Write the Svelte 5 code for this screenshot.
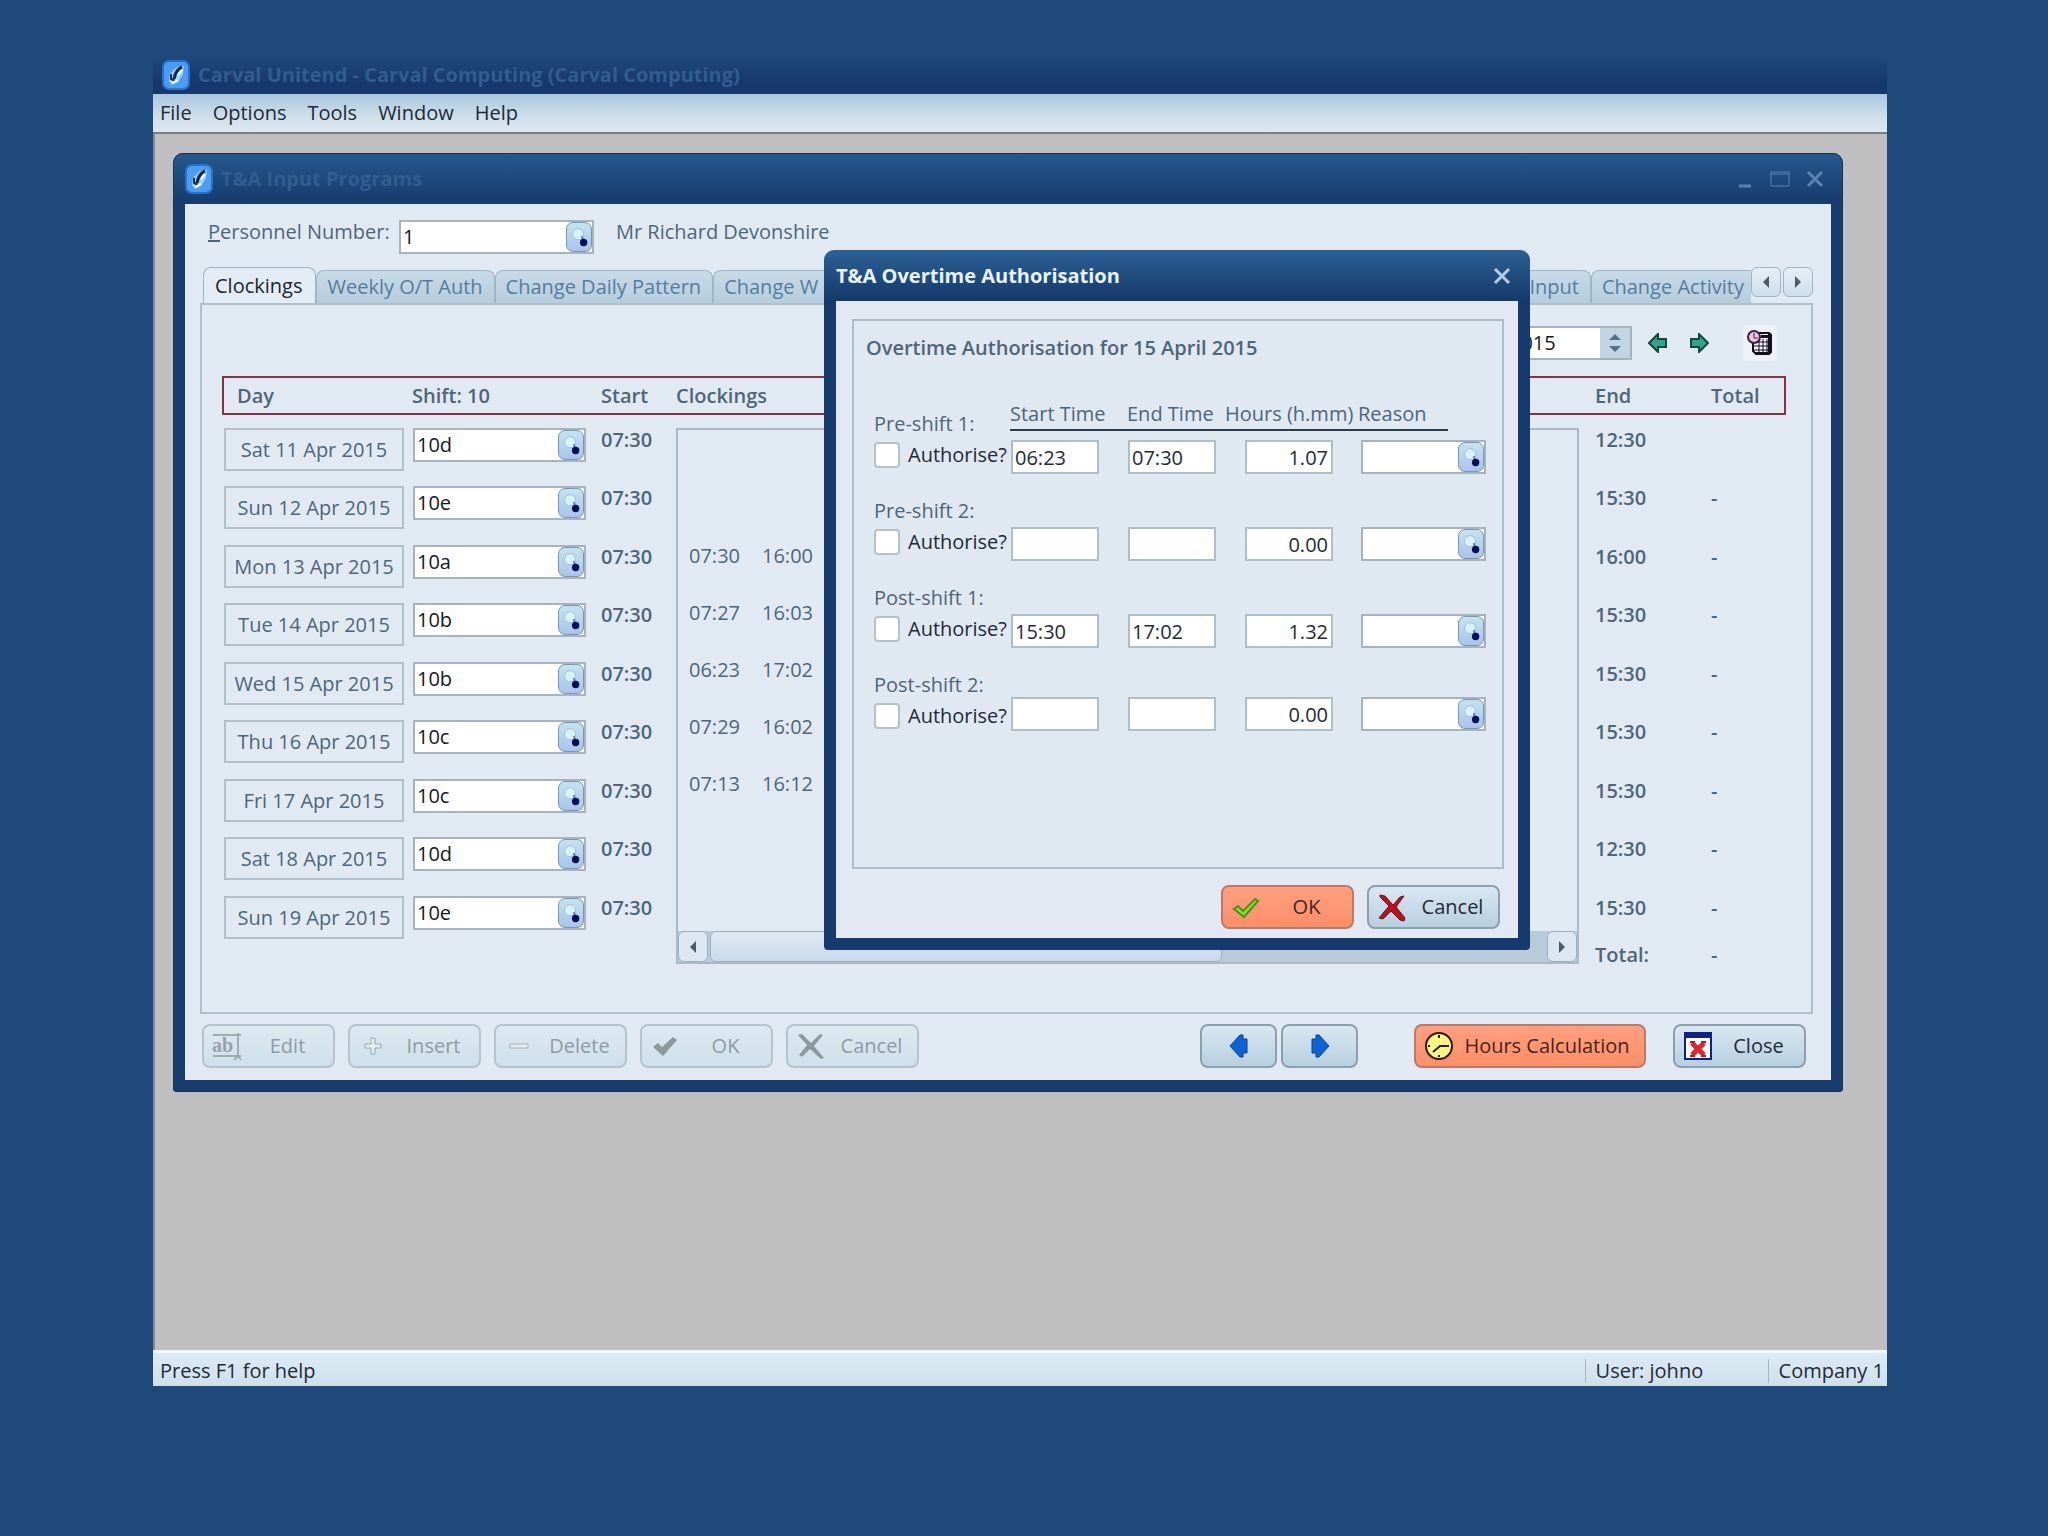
<script>
  const menus = ["File", "Options", "Tools", "Window", "Help"];

  const days = [
    { day: "Sat 11 Apr 2015", shift: "10d", start: "07:30", end: "12:30", total: "" },
    { day: "Sun 12 Apr 2015", shift: "10e", start: "07:30", end: "15:30", total: "-" },
    { day: "Mon 13 Apr 2015", shift: "10a", start: "07:30", end: "16:00", total: "-" },
    { day: "Tue 14 Apr 2015", shift: "10b", start: "07:30", end: "15:30", total: "-" },
    { day: "Wed 15 Apr 2015", shift: "10b", start: "07:30", end: "15:30", total: "-" },
    { day: "Thu 16 Apr 2015", shift: "10c", start: "07:30", end: "15:30", total: "-" },
    { day: "Fri 17 Apr 2015", shift: "10c", start: "07:30", end: "15:30", total: "-" },
    { day: "Sat 18 Apr 2015", shift: "10d", start: "07:30", end: "12:30", total: "-" },
    { day: "Sun 19 Apr 2015", shift: "10e", start: "07:30", end: "15:30", total: "-" },
  ];

  const clockings = [
    ["", ""],
    ["", ""],
    ["07:30", "16:00"],
    ["07:27", "16:03"],
    ["06:23", "17:02"],
    ["07:29", "16:02"],
    ["07:13", "16:12"],
  ];

  const overtime = [
    { name: "Pre-shift 1:", start: "06:23", end: "07:30", hours: "1.07" },
    { name: "Pre-shift 2:", start: "", end: "", hours: "0.00" },
    { name: "Post-shift 1:", start: "15:30", end: "17:02", hours: "1.32" },
    { name: "Post-shift 2:", start: "", end: "", hours: "0.00" },
  ];
</script>

{#snippet logo()}
  <svg class="logo" viewBox="0 0 28 30" aria-hidden="true">
    <rect x="1" y="1" width="26" height="28" rx="6" fill="#4a9df2" stroke="#2b70cc" stroke-width="2" />
    <path d="M8 14l7-7 7-1-1 8-5 8-6 3-3-4z" fill="#a5d2f9" />
    <path d="M20 7c-5 2-7 6-8 12" fill="none" stroke="#0a2a50" stroke-width="3" />
    <path d="M9 14v5l4 2" fill="none" stroke="#0a2a50" stroke-width="2" />
    <path d="M10 23l6-3M16 15l4-5" stroke="#f4fbff" stroke-width="2" />
  </svg>
{/snippet}

{#snippet lookup(label)}
  <button class="lookup" aria-label={label}>
    <svg viewBox="0 0 26 30" aria-hidden="true">
      <circle cx="12" cy="12" r="6" fill="#d8f2fd" stroke="#9cbbe0" stroke-width="1" />
      <path d="M16 14l2 6" stroke="#5c7fb8" stroke-width="2" />
      <circle cx="18" cy="21" r="4" fill="#040f5a" />
    </svg>
  </button>
{/snippet}

<div class="desktop">
  <div class="app">
    <header class="app-title">
      {@render logo()}
      <span>Carval Unitend - Carval Computing (Carval Computing)</span>
    </header>

    <nav class="menubar">
      {#each menus as menu}
        <button>{menu}</button>
      {/each}
    </nav>

    <main class="workspace">
      <section class="window">
        <header class="window-title">
          {@render logo()}
          <h1>T&amp;A Input Programs</h1>
          <div class="window-buttons">
            <button aria-label="Minimise">
              <svg viewBox="0 0 20 20"><path d="M4 17h12" /></svg>
            </button>
            <button aria-label="Maximise">
              <svg viewBox="0 0 20 20"><path d="M1 3h18v14H1zM1 5h18" class="thin" /></svg>
            </button>
            <button aria-label="Close window">
              <svg viewBox="0 0 20 20"><path d="M3 3l14 14M17 3L3 17" /></svg>
            </button>
          </div>
        </header>

        <div class="window-body">
          <div class="person">
            <label for="personnel"><u>P</u>ersonnel Number:</label>
            <div class="field">
              <input id="personnel" type="text" value="1" />
              {@render lookup("Find person")}
            </div>
            <span>Mr Richard Devonshire</span>
          </div>

          <div class="tabs">
            <button class="tab active">Clockings</button>
            <button class="tab">Weekly O/T Auth</button>
            <button class="tab">Change Daily Pattern</button>
            <button class="tab wide">Change W</button>
            <button class="tab">Input</button>
            <button class="tab last">Change Activity</button>
            <div class="arrows">
              <button aria-label="Previous tabs">
                <svg viewBox="0 0 10 12"><path d="M8 0v12L2 6z" /></svg>
              </button>
              <button aria-label="Next tabs">
                <svg viewBox="0 0 10 12"><path d="M2 0v12l6-6z" /></svg>
              </button>
            </div>
          </div>

          <div class="panel">
            <div class="period">
              <div class="field date">
                <input type="text" value="2015" aria-label="Period" />
                <button class="spin" aria-label="Change period">
                  <svg viewBox="0 0 14 20"><path d="M1 7l6-6 6 6zM1 13l6 6 6-6z" /></svg>
                </button>
              </div>
              <button class="step" aria-label="Previous period">
                <svg viewBox="0 0 20 20"><path d="M1 10l9-9v5h8v8h-8v5z" /></svg>
              </button>
              <button class="step" aria-label="Next period">
                <svg viewBox="0 0 20 20"><path d="M19 10l-9-9v5H2v8h8v5z" /></svg>
              </button>
              <button class="calc" aria-label="Calculator">
                <svg viewBox="0 0 26 26">
                  <path d="M9 3h13l2 2v17l-2 2H9l-3-3V9z" fill="#f6f3fa" stroke="#15101c" stroke-width="2" />
                  <path d="M14 5h9v3h-9z" fill="#15101c" />
                  <path d="M7 12h17M7 16h17M7 20h17M12 9v14M16 9v14M20 9v14" stroke="#15101c" stroke-width="1" />
                  <path d="M22 4v19M8 23h15" stroke="#15101c" stroke-width="2" />
                  <circle cx="7" cy="7" r="6" fill="#edc4de" stroke="#3a1f42" stroke-width="2" />
                  <path d="M7 3v5h4" fill="none" stroke="#3a1f42" stroke-width="1" />
                </svg>
              </button>
            </div>

            <table class="days">
              <colgroup>
                <col class="c-day" />
                <col class="c-shift" />
                <col class="c-start" />
                <col />
                <col class="c-end" />
                <col class="c-total" />
              </colgroup>
              <thead>
                <tr>
                  <th>Day</th>
                  <th>Shift: 10</th>
                  <th>Start</th>
                  <th>Clockings</th>
                  <th>End</th>
                  <th>Total</th>
                </tr>
              </thead>
              <tbody>
                {#each days as row, i}
                  <tr>
                    <td><button class="day">{row.day}</button></td>
                    <td>
                      <div class="field shift">
                        <input type="text" value={row.shift} aria-label="Shift for {row.day}" />
                        {@render lookup("Find shift")}
                      </div>
                    </td>
                    <td>{row.start}</td>
                    {#if i === 0}
                      <td rowspan="10">
                        <div class="pane">
                          <table class="times">
                            <tbody>
                              {#each clockings as pair}
                                <tr>
                                  <td>{pair[0]}</td>
                                  <td>{pair[1]}</td>
                                </tr>
                              {/each}
                            </tbody>
                          </table>
                          <div class="scrollbar">
                            <button aria-label="Scroll left">
                              <svg viewBox="0 0 10 12"><path d="M8 0v12L2 6z" /></svg>
                            </button>
                            <div class="thumb"></div>
                            <button aria-label="Scroll right">
                              <svg viewBox="0 0 10 12"><path d="M2 0v12l6-6z" /></svg>
                            </button>
                          </div>
                        </div>
                      </td>
                    {/if}
                    <td class="end">{row.end}</td>
                    <td>{row.total}</td>
                  </tr>
                {/each}
                <tr>
                  <td></td>
                  <td></td>
                  <td></td>
                  <td class="end">Total:</td>
                  <td>-</td>
                </tr>
              </tbody>
            </table>
          </div>

          <footer class="toolbar">
            <button class="btn" disabled>
              <svg viewBox="0 0 30 30">
                <path d="M1 4h28M1 25h28M26 2v23M22 29l4-4 3 4" fill="none" stroke="#a0abb1" stroke-width="2" />
                <text x="0" y="21" font-size="20" font-weight="700" font-family="Liberation Serif, serif" fill="#98a3a9">ab</text>
              </svg>
              <span>Edit</span>
            </button>
            <button class="btn" disabled>
              <svg viewBox="0 0 30 30"><path d="M13 7h4v6h6v4h-6v6h-4v-6H7v-4h6z" fill="#e4edf2" stroke="#9aa6ac" stroke-width="1" /></svg>
              <span>Insert</span>
            </button>
            <button class="btn" disabled>
              <svg viewBox="0 0 30 30"><path d="M6 13h18v4H6z" fill="#e4edf2" stroke="#a6b1b7" stroke-width="1" /></svg>
              <span>Delete</span>
            </button>
            <button class="btn" disabled>
              <svg viewBox="0 0 30 30"><path d="M3 16l5-4 4 4L23 6l4 3-14 16z" fill="#8d989e" /></svg>
              <span>OK</span>
            </button>
            <button class="btn" disabled>
              <svg viewBox="0 0 30 30"><path d="M2 4l4-1 9 9 9-9 3 1-9 11 10 12-3 1-11-10-8 8-3-2 8-10z" fill="#8d989e" /></svg>
              <span>Cancel</span>
            </button>

            <div class="pager">
              <button class="btn" aria-label="Previous record">
                <svg viewBox="0 0 20 24"><path d="M1 12L11 1h3v4h4v14h-4v4h-3z" fill="#0c63d4" stroke="#0a3f96" stroke-width="1" /></svg>
              </button>
              <button class="btn" aria-label="Next record">
                <svg viewBox="0 0 20 24"><path d="M19 12L9 1H6v4H2v14h4v4h3z" fill="#0c63d4" stroke="#0a3f96" stroke-width="1" /></svg>
              </button>
            </div>
            <button class="btn hot hours">
              <svg viewBox="0 0 30 30">
                <circle cx="15" cy="15" r="13" fill="#fbf781" stroke="#2a1a14" stroke-width="2" />
                <path d="M25 15h-9l-7 6" fill="none" stroke="#2a1a14" stroke-width="2" />
                <path d="M15 4v3M15 24v2M4 15h2" stroke="#2a1a14" stroke-width="2" />
              </svg>
              <span>Hours Calculation</span>
            </button>
            <button class="btn">
              <svg viewBox="0 0 30 30">
                <path d="M2 2h26v26H2z" fill="#fff" stroke="#10208a" stroke-width="2" />
                <path d="M1 1h28v6H1z" fill="#10208a" />
                <path d="M9 12l12 12M21 12L9 24" stroke="#e3242f" stroke-width="5" />
                <path d="M7 11h5M18 11h5M7 25h5M18 25h5" stroke="#b81a2a" stroke-width="2" />
              </svg>
              <span>Close</span>
            </button>
          </footer>
        </div>
      </section>

      <div class="dialog" role="dialog" aria-labelledby="dialog-title">
        <header class="window-title">
          <h2 id="dialog-title">T&amp;A Overtime Authorisation</h2>
          <div class="window-buttons">
            <button aria-label="Close dialog">
              <svg viewBox="0 0 20 20"><path d="M3 3l14 14M17 3L3 17" /></svg>
            </button>
          </div>
        </header>

        <div class="dialog-body">
          <div class="group">
            <h3>Overtime Authorisation for 15 April 2015</h3>

            <div class="overtime">
              <div class="heads">
                <span>Start Time</span>
                <span>End Time</span>
                <span class="hours-head">Hours (h.mm)</span>
                <span>Reason</span>
              </div>
              {#each overtime as line}
                <div class="line">
                  <span class="line-name">{line.name}</span>
                  <label class="authorise">
                    <input type="checkbox" />
                    Authorise?
                  </label>
                  <input class="box" type="text" value={line.start} aria-label="{line.name} start time" />
                  <input class="box" type="text" value={line.end} aria-label="{line.name} end time" />
                  <input class="box right" type="text" value={line.hours} aria-label="{line.name} hours" />
                  <div class="field">
                    <input type="text" aria-label="{line.name} reason" />
                    {@render lookup("Find reason")}
                  </div>
                </div>
              {/each}
            </div>
          </div>

          <div class="dialog-buttons">
            <button class="btn hot">
              <svg viewBox="0 0 30 30">
                <path d="M3 17l4-3 5 5L24 7l3 2-14 16z" fill="#86e22f" stroke="#4f8f1c" stroke-width="2" />
              </svg>
              <span>OK</span>
            </button>
            <button class="btn">
              <svg viewBox="0 0 30 30">
                <path d="M3 3l5 1 8 9 7-8 4-1-8 11 9 11-1 3-4-1-9-9-8 8-4-1 10-12-9-9z" fill="#bd0f1c" stroke="#6b1522" stroke-width="1" />
              </svg>
              <span>Cancel</span>
            </button>
          </div>
        </div>
      </div>
    </main>

    <footer class="status">
      <span class="help">Press F1 for help</span>
      <span class="user">User: johno</span>
      <span class="company">Company 1</span>
    </footer>
  </div>
</div>

<style>
  :global(body) {
    margin: 0;
    background: #1f487b;
  }

  .desktop {
    box-sizing: border-box;
    min-height: 100vh;
    padding: 58px 161px 150px 153px;
    display: flex;
    background: #1f487b;
    font: 20px/24px "Open Sans", "Noto Sans", sans-serif;
    color: #4e6678;
  }

  button,
  input {
    box-sizing: border-box;
    margin: 0;
    padding: 0;
    font: inherit;
    color: inherit;
    background: none;
    border: none;
  }

  svg {
    display: block;
  }

  .app {
    flex: 1;
    display: flex;
    flex-direction: column;
  }

  .app-title {
    display: flex;
    align-items: center;
    gap: 8px;
    box-sizing: border-box;
    height: 36px;
    padding: 0 0 2px 9px;
    background: linear-gradient(#1f487b, #17386b 70%);
    color: #315d90;
    font-weight: 700;
  }

  .logo {
    width: 28px;
    height: 30px;
  }

  .menubar {
    display: flex;
    gap: 21px;
    height: 38px;
    padding-left: 7px;
    background: linear-gradient(#a9c7de, #cfdfea 60%, #dde8ef);
    border-bottom: 2px solid #75818a;
    color: #1e2a36;
  }

  .workspace {
    flex: 1;
    position: relative;
    background: #c0bfbf;
    border-left: 2px solid #86898d;
  }

  .window {
    margin: 19px 44px 0 18px;
    padding: 0 12px 12px;
    border-radius: 10px 10px 4px 4px;
    background: linear-gradient(#27588d, #173c6d 50px);
    box-shadow: inset 0 0 0 1px #16345c;
  }

  .window-title {
    display: flex;
    align-items: center;
    gap: 8px;
    height: 51px;
    color: #315d90;
  }

  h1,
  h2,
  h3 {
    margin: 0;
    font-size: 20px;
    line-height: 24px;
    font-weight: 700;
  }

  h3 {
    font-weight: 600;
  }

  .window-buttons {
    display: flex;
    gap: 15px;
    margin-left: auto;
    padding-right: 6px;
    color: #5a82b3;
  }

  .window-buttons svg {
    width: 20px;
    height: 20px;
    fill: none;
    stroke: currentColor;
    stroke-width: 3;
  }

  .window-buttons .thin {
    stroke-width: 1;
  }

  .window-body {
    padding: 16px 18px 12px 15px;
    background: #e1eaf3;
  }

  .person {
    display: flex;
    align-items: flex-start;
    height: 47px;
    padding-left: 8px;
  }

  .person label {
    width: 191px;
  }

  .person .field {
    width: 195px;
    margin-right: 22px;
  }

  .field {
    display: flex;
    box-sizing: border-box;
    height: 34px;
    background: #fff;
    border: 2px solid #a7b4bf;
    color: #16191c;
  }

  .field input {
    flex: 1;
    min-width: 0;
    padding-left: 2px;
  }

  .lookup {
    width: 26px;
    height: 30px;
    border: 1px solid #7795b4;
    border-radius: 7px;
    background: linear-gradient(#c5e3ec, #a9c4ea);
  }

  .lookup svg {
    width: 24px;
    height: 28px;
  }

  .tabs {
    display: flex;
    align-items: flex-end;
    height: 36px;
    padding-left: 3px;
  }

  .tab {
    height: 33px;
    padding: 0 11px 0 10px;
    border: 1px solid #9fb4c4;
    border-bottom: none;
    border-radius: 8px 8px 0 0;
    background: linear-gradient(#c8dae7, #b4cddf);
    color: #557c9b;
    white-space: nowrap;
  }

  .tab.active {
    height: 36px;
    padding: 0 13px 0 11px;
    background: #e3ecf5;
    color: #1b2530;
  }

  .tab.wide {
    flex: 1;
    text-align: left;
  }

  .tab.last {
    padding-right: 7px;
    border-right: none;
    border-radius: 8px 0 0 0;
  }

  .arrows {
    display: flex;
    gap: 2px;
    margin-bottom: 6px;
  }

  .arrows button {
    width: 30px;
    height: 30px;
    display: flex;
    align-items: center;
    justify-content: center;
    border: 1px solid #9fb4c4;
    border-radius: 6px;
    background: linear-gradient(#e6eef6, #cfdfeb);
  }

  .arrows svg,
  .scrollbar svg {
    width: 10px;
    height: 12px;
    fill: #4a5c69;
  }

  .panel {
    padding: 19px 25px 45px 20px;
    border: 2px solid #afbfcb;
    background: #e1eaf3;
  }

  .period {
    display: flex;
    align-items: center;
    justify-content: flex-end;
    height: 38px;
    margin-bottom: 14px;
    padding-right: 9px;
  }

  .date {
    width: 130px;
    margin-right: 16px;
  }

  .date input {
    padding-left: 6px;
  }

  .spin {
    width: 30px;
    display: flex;
    align-items: center;
    justify-content: center;
    background: #c3d5e4;
  }

  .spin svg {
    width: 14px;
    height: 20px;
    fill: #557080;
  }

  .step {
    margin-right: 21px;
  }

  .step svg {
    width: 20px;
    height: 20px;
    fill: #2ba78d;
    stroke: #14463d;
    stroke-width: 2;
  }

  .calc {
    width: 34px;
    height: 36px;
    margin-left: 13px;
    padding: 4px;
    border-radius: 4px;
    background: #eef2f8;
  }

  .calc svg {
    width: 26px;
    height: 26px;
  }

  .days {
    width: 100%;
    table-layout: fixed;
    border-spacing: 0;
  }

  .c-day {
    width: 190px;
  }

  .c-shift {
    width: 189px;
  }

  .c-start {
    width: 75px;
  }

  .c-end {
    width: 132px;
  }

  .c-total {
    width: 75px;
  }

  th {
    height: 35px;
    padding: 0;
    text-align: left;
    font-weight: 600;
    border: solid #863049;
    border-width: 2px 0;
  }

  th:first-child {
    padding-left: 13px;
    border-left-width: 2px;
  }

  th:last-child {
    border-right-width: 2px;
  }

  th:nth-child(5),
  .end {
    padding-left: 16px;
  }

  .days > tbody::before {
    content: "";
    display: block;
    height: 13px;
  }

  td {
    height: 58px;
    padding: 0;
    vertical-align: top;
    font-weight: 600;
  }

  .days > tbody > tr:nth-child(even) > td {
    height: 59px;
  }

  .days > tbody > tr:nth-child(9) > td {
    height: 47px;
  }

  .days > tbody > tr:nth-child(10) > td {
    height: 24px;
  }

  .day {
    width: 180px;
    height: 43px;
    margin-left: 2px;
    padding-top: 1px;
    border: 2px solid #b3c0ca;
    font-weight: 400;
  }

  .shift {
    width: 173px;
    margin-left: 1px;
    font-weight: 400;
  }

  .pane {
    display: flex;
    flex-direction: column;
    justify-content: space-between;
    box-sizing: border-box;
    height: 536px;
    border: 2px solid #a9b9c6;
  }

  .times {
    align-self: flex-start;
    border-spacing: 0;
    margin: 0 0 0 11px;
  }

  .times td {
    min-width: 73px;
    height: 57px;
    font-weight: 400;
  }

  .scrollbar {
    display: flex;
    justify-content: space-between;
    height: 31px;
    background: #b9cad9;
  }

  .scrollbar button {
    width: 30px;
    display: flex;
    align-items: center;
    justify-content: center;
    border: 1px solid #9fb0bd;
    border-radius: 6px;
    background: #dde7f1;
  }

  .thumb {
    width: 57%;
    margin-right: auto;
    margin-left: 2px;
    border-radius: 6px;
    border: 1px solid #9fb0bd;
    box-sizing: border-box;
    background: linear-gradient(#dfe9f1, #cbd9ec);
  }

  .toolbar {
    display: flex;
    gap: 13px;
    margin-top: 10px;
    padding: 0 7px 0 2px;
  }

  .btn {
    width: 133px;
    height: 44px;
    display: flex;
    align-items: center;
    padding: 0 0 0 8px;
    border: 2px solid #8c9fae;
    border-radius: 8px;
    background: linear-gradient(#d9e7f1, #b7cfdf);
    color: #1e2a36;
  }

  .btn svg {
    width: 30px;
    height: 30px;
  }

  .btn span {
    flex: 1;
    text-align: center;
    white-space: nowrap;
  }

  .btn:disabled {
    border-color: #b4c3cd;
    background: linear-gradient(#dce9f1, #cfe0ea);
    color: #8e9ba3;
  }

  .btn.hot {
    border-color: #b9796b;
    background: linear-gradient(#ff9f7f, #fb8f68);
    color: #4a231e;
  }

  .pager {
    display: flex;
    gap: 4px;
    margin-left: auto;
    margin-right: 43px;
  }

  .pager .btn {
    width: 77px;
    padding: 0;
    justify-content: center;
  }

  .pager .btn svg {
    width: 20px;
    height: 26px;
  }

  .btn.hours {
    width: 232px;
    margin-right: 14px;
    padding-right: 4px;
  }

  .dialog {
    position: absolute;
    top: 116px;
    left: 669px;
    box-sizing: border-box;
    width: 706px;
    padding: 0 12px 12px;
    border-radius: 10px 10px 4px 4px;
    background: linear-gradient(#2d6195, #153a6b 50px);
  }

  .dialog .window-title {
    color: #eaf3fb;
  }

  .dialog .window-buttons {
    color: #b4cce6;
  }

  .dialog-body {
    padding: 18px 14px 9px 16px;
    background: #e3e9f3;
  }

  .group {
    box-sizing: border-box;
    height: 550px;
    padding: 15px 12px;
    border: 2px solid #adbcc8;
    background: #e0e8f1;
  }

  .overtime {
    margin: 42px 0 0 8px;
  }

  .heads {
    display: flex;
    width: 438px;
    height: 27px;
    margin-left: 136px;
    border-bottom: 2px solid #2b3b49;
    white-space: nowrap;
  }

  .heads span {
    flex: none;
    width: 117px;
  }

  .heads .hours-head {
    width: 133px;
    margin-left: -19px;
  }

  .line {
    display: grid;
    grid-template-columns: 137px 117px 117px 116px 125px;
    grid-template-rows: 28px 34px;
    margin-bottom: 25px;
  }

  .heads + .line {
    margin-top: -19px;
  }

  .line:last-child {
    grid-template-rows: 24px 34px;
  }

  .line-name {
    grid-column: 1 / -1;
    justify-self: start;
  }

  .authorise {
    display: flex;
    align-items: center;
    gap: 8px;
    height: 30px;
    white-space: nowrap;
    color: #1e2a36;
  }

  .line:last-child .authorise {
    height: 38px;
  }

  .authorise input {
    appearance: none;
    width: 26px;
    height: 26px;
    background: #fff;
    border: 2px solid #b5c1cc;
    border-radius: 4px;
  }

  .box {
    width: 88px;
    height: 34px;
    padding: 0 3px 0 2px;
    background: #fff;
    border: 2px solid #b0bec9;
    color: #1e2a36;
  }

  .box.right {
    text-align: right;
  }

  .dialog-buttons {
    display: flex;
    justify-content: flex-end;
    gap: 13px;
    margin-top: 16px;
    padding-right: 4px;
  }

  .status {
    display: flex;
    align-items: center;
    box-sizing: border-box;
    height: 36px;
    padding-top: 2px;
    border-top: 3px solid #f1f7fb;
    background: linear-gradient(#dcebf5, #cfe0ea);
    color: #1e2a36;
    white-space: nowrap;
  }

  .help {
    flex: 1;
    padding-left: 7px;
  }

  .user {
    width: 172px;
    padding-left: 10px;
    border-left: 1px solid #a9b5be;
  }

  .company {
    padding: 0 3px 0 10px;
    border-left: 1px solid #a9b5be;
  }
</style>
